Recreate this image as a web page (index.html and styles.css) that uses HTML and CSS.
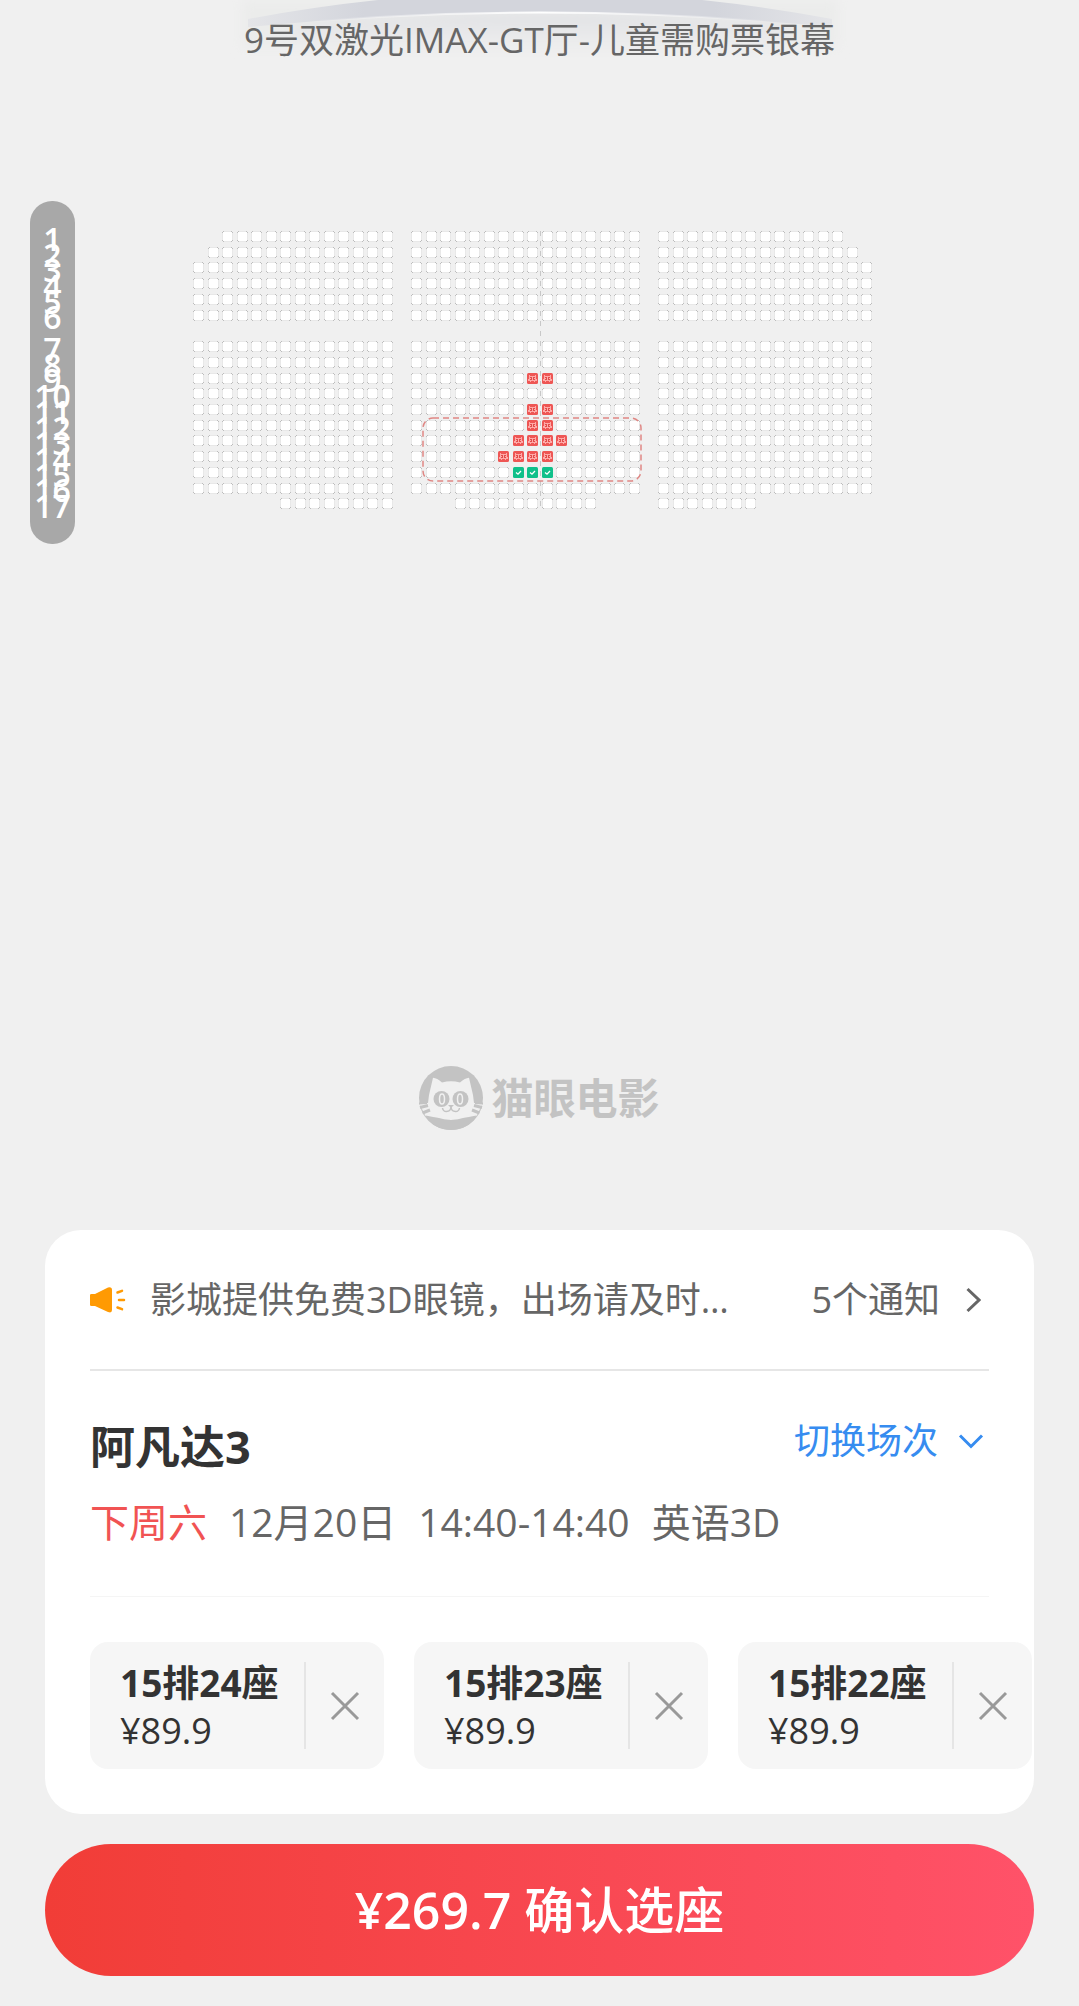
FILE: index.html
```html
<!DOCTYPE html>
<html lang="zh-CN">
<head>
  <meta charset="UTF-8" />
  <meta name="viewport" content="width=device-width, initial-scale=1" />
  <title>选座</title>
  <link rel="stylesheet" href="styles.css">
</head>
<body>

  <header class="screen">
    <svg class="screen-arc" viewBox="0 0 624 60" aria-hidden="true">
      <defs>
        <linearGradient id="glow" x1="0" y1="0" x2="0" y2="1">
          <stop offset="0" stop-color="#e0e1e4" />
          <stop offset="1" stop-color="#f0f0f0" />
        </linearGradient>
        <linearGradient id="band" x1="0" y1="0" x2="1" y2="0">
          <stop offset="0" stop-color="#e4e5e8" />
          <stop offset="0.2" stop-color="#d3d5dc" />
          <stop offset="0.8" stop-color="#d3d5dc" />
          <stop offset="1" stop-color="#e4e5e8" />
        </linearGradient>
        <linearGradient id="shine" x1="0" y1="0" x2="1" y2="0">
          <stop offset="0.1" stop-color="#fff" stop-opacity="0" />
          <stop offset="0.5" stop-color="#fff" />
          <stop offset="0.9" stop-color="#fff" stop-opacity="0" />
        </linearGradient>
        <filter id="soft" x="-10%" y="-50%" width="120%" height="200%">
          <feGaussianBlur stdDeviation="6" />
        </filter>
      </defs>
      <path d="M14 0H610V48H14Z" fill="#ebeceb" filter="url(#soft)" />
      <path d="M60 23Q312 2 564 23L540 54H84Z" fill="url(#glow)" filter="url(#soft)" />
      <path d="M20 19Q95 5 170 -2H454Q529 5 604 19V27Q312 -2 20 27Z" fill="url(#band)" />
      <path d="M20 27Q312 -2 604 27" fill="none" stroke="url(#shine)" stroke-width="2" />
    </svg>
    <h1 class="screen-name">9号双激光IMAX-GT厅-儿童需购票银幕</h1>
  </header>

  <main class="hall">
    <div class="map">
      <ol class="rows" id="rows"></ol>
      <div class="seats" id="seats">
        <div class="middle-line"></div>
        <svg class="best-area" viewBox="0 0 220 66" aria-hidden="true">
          <rect x="1" y="1" width="218" height="63" rx="10" />
        </svg>
      </div>
    </div>

    <div class="brand">
      <svg class="brand-cat" viewBox="0 0 64 64" aria-hidden="true">
        <circle cx="32" cy="32" r="32" fill="#c3c3c3" />
        <path d="M0 37H9L10 29L14 11.700Q18 12 23 16.500Q32 14 41 16.500Q46 12 50 11.700L54 29L55 37H64L57.500 50Q47 54 32 54Q17 54 6.500 50Z" fill="#f0f0f0" />
        <path d="M6.500 49.500Q15 51 20 52Q26 54 32 54Q38 54 44 52Q49 51 57.500 49.500Q49 64 32 64Q15 64 6.500 49.500Z" fill="#c3c3c3" />
        <path d="M1 41.500L9 39.500M3.500 47L11 44M63 41.500L55 39.500M60.500 47L53 44" stroke="#c3c3c3" stroke-width="3" />
        <path d="M0 37.500L8 37M64 37.500L56 37" stroke="#c3c3c3" stroke-width="2" />
        <circle cx="22.500" cy="33" r="8" fill="#c3c3c3" />
        <circle cx="41.500" cy="33" r="8" fill="#c3c3c3" />
        <ellipse cx="23" cy="33" rx="2.500" ry="5" fill="#c3c3c3" stroke="#f0f0f0" stroke-width="1.500" />
        <ellipse cx="41" cy="33" rx="2.500" ry="5" fill="#c3c3c3" stroke="#f0f0f0" stroke-width="1.500" />
        <path d="M29 39H35L32 42Z" fill="#c3c3c3" />
        <path d="M23.500 42Q24 45.500 27.500 45.500Q31.500 45.500 32 41Q32.500 45.500 36.500 45.500Q40 45.500 40.500 42" fill="none" stroke="#c3c3c3" stroke-width="1.500" />
      </svg>
      <span class="brand-name">猫眼电影</span>
    </div>
  </main>

  <section class="card">
    <a class="notice" href="#">
      <svg class="notice-horn" viewBox="0 0 36 26" aria-hidden="true">
        <path d="M0 8Q0 7 1.500 7H5L18 0.500Q22 -0.500 22 3V23Q22 26.500 18 25L5 19H1.500Q0 19 0 18Z" />
        <path d="M27.500 5.500L32 3.800M29 13H34M27.500 20.500L32 22.200" />
      </svg>
      <span class="notice-text">影城提供免费3D眼镜，出场请及时…</span>
      <span class="notice-count">5个通知</span>
      <svg class="chevron-right" viewBox="0 0 15 26" aria-hidden="true">
        <path d="M1.500 2L13 13L1.500 24" />
      </svg>
    </a>

    <div class="show">
      <div class="show-head">
        <h2 class="movie">阿凡达3</h2>
        <button class="switch" type="button">
          切换场次
          <svg class="chevron-down" viewBox="0 0 26 15" aria-hidden="true">
            <path d="M2 1.500L13 12.500L24 1.500" />
          </svg>
        </button>
      </div>
      <p class="show-info">
        <span class="day">下周六</span>
        <span>12月20日</span>
        <span>14:40-14:40</span>
        <span>英语3D</span>
      </p>
    </div>

    <ul class="picked" id="picked"></ul>
  </section>

  <button class="confirm" type="button"><span class="total">¥269.7</span> 确认选座</button>

  <script src="seats.js"></script>
</body>
</html>
```

FILE: styles.css
```css
* {
  box-sizing: border-box;
}

body {
  margin: 0;
  padding-bottom: 30px;
  min-height: 100vh;
  display: flex;
  flex-direction: column;
  background: #f0f0f0;
  color: #666;
  font-family: "Open Sans", "Noto Sans CJK SC", sans-serif;
  font-size: 36px;
  line-height: 48px;
}

h1, h2, p, ul, ol {
  margin: 0;
  padding: 0;
  font-weight: normal;
  list-style: none;
}

button {
  border: none;
  padding: 0;
  background: none;
  color: inherit;
  font: inherit;
  cursor: pointer;
}

/* 银幕 */
.screen {
  position: relative;
  padding: 16px 0;
  text-align: center;
}
.screen-arc {
  position: absolute;
  top: 0;
  left: 50%;
  width: 624px;
  margin-left: -312px;
}
.screen-name {
  position: relative;
  font-size: 35px;
  line-height: 48px;
}

.hall {
  flex: 1;
  display: flex;
  flex-direction: column;
  justify-content: space-between;
  padding: 121px 30px 100px;
}

/* 座位图 */
.map {
  display: flex;
  align-items: center;
  gap: 118px;
}
.rows {
  display: grid;
  grid-template-rows: repeat(18, 1fr);
  width: 45px;
  height: 343px;
  padding: 30px 0;
  border-radius: 22px;
  background: #a8a8a8;
  color: #fff;
  font-size: 32px;
  font-weight: 600;
  line-height: 16px;
}
.rows li {
  display: flex;
  align-items: center;
  justify-content: center;
  min-height: 0;
}
.seats {
  position: relative;
  display: grid;
  grid-template-columns: repeat(47, 1fr);
  grid-template-rows: repeat(18, 1fr);
  flex: 0 1 683px;
  height: 283px;
}
.seat {
  appearance: none;
  width: 11px;
  height: 11px;
  margin: 0;
  border: none;
  background: url("data:image/svg+xml,%3Csvg xmlns='http://www.w3.org/2000/svg' viewBox='0 0 11 11' shape-rendering='crispEdges'%3E%3Cpath fill='%23e8e8e8' d='M1 0h9v1h1v9h-1v1h-9v-1h-1v-9h1z'/%3E%3Cpath fill='%23fff' d='M1 1h9v9h-9z'/%3E%3Cpath fill='%23bdbdbd' d='M1 0h1v1h-1zM0 1h1v1h-1zM9 0h1v1h-1zM10 1h1v1h-1zM0 9h1v1h-1zM1 10h1v1h-1zM10 9h1v1h-1zM9 10h1v1h-1z'/%3E%3C/svg%3E") 0 0 / 11px 11px no-repeat;
  cursor: pointer;
}
/* 已售 */
.seat:disabled {
  background-image: url("data:image/svg+xml,%3Csvg xmlns='http://www.w3.org/2000/svg' viewBox='0 0 11 11'%3E%3Crect width='11' height='11' rx='1.500' fill='%23ee5654'/%3E%3Cpath fill='%23ffa9a7' d='M2 2h1v1h5v-1h1v4h1v2h-2v1h-1v-1h-3v1h-1v-1h-2v-2h1z'/%3E%3Cpath fill='%23e04c4a' d='M3 4h2v3h-2zM6 4h2v3h-2z'/%3E%3Cpath fill='%23ffa9a7' d='M3 5h1v1h-1zM7 5h1v1h-1z'/%3E%3C/svg%3E");
  cursor: default;
}
/* 已选 */
.seat:checked {
  background-image: url("data:image/svg+xml,%3Csvg xmlns='http://www.w3.org/2000/svg' viewBox='0 0 11 11'%3E%3Crect width='11' height='11' rx='1.500' fill='%230fc08a'/%3E%3Cpath fill='none' stroke='%23fff' stroke-width='1.300' d='M3 5.500L5 7.200L8 4'/%3E%3C/svg%3E");
}

.middle-line {
  position: absolute;
  top: 0;
  left: 347px;
  width: 1px;
  height: 279px;
  background: repeating-linear-gradient(#c8c8c8 0 5px, transparent 5px 10px);
}
.best-area {
  position: absolute;
  top: 186px;
  left: 229px;
  width: 220px;
  pointer-events: none;
}
.best-area rect {
  fill: none;
  stroke: #df8784;
  stroke-width: 1.500;
  stroke-dasharray: 6 4;
}

.brand {
  display: flex;
  align-items: center;
  justify-content: center;
  gap: 8px;
  color: #c3c3c3;
}
.brand-cat {
  width: 64px;
}
.brand-name {
  font-size: 42px;
  font-weight: 700;
}

/* 底部卡片 */
.card {
  margin: 0 45px 30px;
  padding: 0 45px 45px;
  border-radius: 36px;
  background: #fff;
  overflow: hidden;
}
.notice {
  display: flex;
  align-items: center;
  height: 141px;
  border-bottom: 2px solid #e6e6e6;
  color: inherit;
  text-decoration: none;
}
.notice-horn {
  flex: none;
  width: 36px;
  margin-right: 24px;
  fill: #ff9a03;
}
.notice-horn path + path {
  stroke: #ff9a03;
  stroke-width: 2.500;
  stroke-linecap: round;
}
.notice-text {
  flex: 1;
  margin-right: 60px;
  overflow: hidden;
  white-space: nowrap;
  text-overflow: ellipsis;
}
.chevron-right {
  width: 15px;
  margin: 0 8px 0 26px;
}
.chevron-right path,
.chevron-down path {
  fill: none;
  stroke: currentColor;
  stroke-width: 3;
}

.show {
  padding: 46px 0 50px;
  border-bottom: 1px solid #f5f5f5;
}
.show-head {
  display: flex;
  justify-content: space-between;
  align-items: flex-start;
}
.movie {
  color: #333;
  font-size: 45px;
  font-weight: 700;
  line-height: 60px;
}
.switch {
  display: flex;
  align-items: center;
  gap: 20px;
  padding-right: 5px;
  color: #368cf0;
}
.chevron-down {
  width: 26px;
}
.show-info {
  display: flex;
  gap: 22px;
  margin-top: 21px;
  font-size: 39px;
}
.day {
  color: #f15353;
}

.picked {
  display: flex;
  gap: 30px;
  margin-top: 45px;
  margin-right: -45px;
}
.chip {
  display: flex;
  align-items: center;
  flex: 0 0 294px;
  height: 127px;
  padding-left: 30px;
  border-radius: 18px;
  background: #f6f6f6;
  color: #333;
}
.chip-text {
  flex: 1;
  padding-top: 3px;
}
.chip-seat {
  display: block;
  font-size: 37px;
  font-weight: 700;
}
.chip-remove {
  display: flex;
  align-items: center;
  justify-content: center;
  width: 80px;
  height: 87px;
  border-left: 2px solid #e5e5e5;
  color: #999;
}
.chip-remove svg {
  width: 30px;
  fill: none;
  stroke: currentColor;
  stroke-width: 3;
}

.confirm {
  height: 132px;
  margin: 0 45px;
  border-radius: 66px;
  background: linear-gradient(90deg, #f13d37, #ff5269);
  color: #fff;
  font-size: 50px;
  font-weight: 500;
}
.total {
  font-weight: 600;
}
```

FILE: seats.js
```js
const rowsList = document.getElementById('rows');
const seatsDiv = document.getElementById('seats');
const pickedList = document.getElementById('picked');

// 每排三个区的列范围（从 1 开始），中间空列是过道
const full = [[1, 14], [16, 31], [33, 47]];
const layout = {
  1: [[3, 14], [16, 31], [33, 45]],
  2: [[2, 14], [16, 31], [33, 46]],
  17: [[7, 14], [19, 28], [33, 39]]
};

const sold = { 9: [24, 25], 11: [24, 25], 12: [24, 25], 13: [23, 24, 25, 26], 14: [22, 23, 24, 25] };
const selected = { 15: [23, 24, 25] };

for (let row = 1; row <= 17; row++) {
  // 第 6 排后面有一条横向过道
  const gridRow = row > 6 ? row + 1 : row;

  const li = document.createElement('li');
  li.textContent = row;
  li.style.gridRow = gridRow;
  rowsList.appendChild(li);

  (layout[row] || full).forEach(([from, to]) => {
    for (let col = from; col <= to; col++) {
      const seat = document.createElement('input');
      seat.type = 'checkbox';
      seat.className = 'seat';
      seat.style.gridArea = `${gridRow} / ${col}`;
      seat.setAttribute('aria-label', `${row}排${col}列`);
      seat.disabled = (sold[row] || []).includes(col);
      seat.checked = (selected[row] || []).includes(col);
      seatsDiv.appendChild(seat);
    }
  });
}

['15排24座', '15排23座', '15排22座'].forEach((name) => {
  const li = document.createElement('li');
  li.className = 'chip';
  li.innerHTML = `
    <div class="chip-text">
      <strong class="chip-seat">${name}</strong>
      <span>¥89.9</span>
    </div>
    <button class="chip-remove" type="button" aria-label="删除">
      <svg viewBox="0 0 30 30"><path d="M2 2L28 28M28 2L2 28" /></svg>
    </button>`;
  pickedList.appendChild(li);
});
```
